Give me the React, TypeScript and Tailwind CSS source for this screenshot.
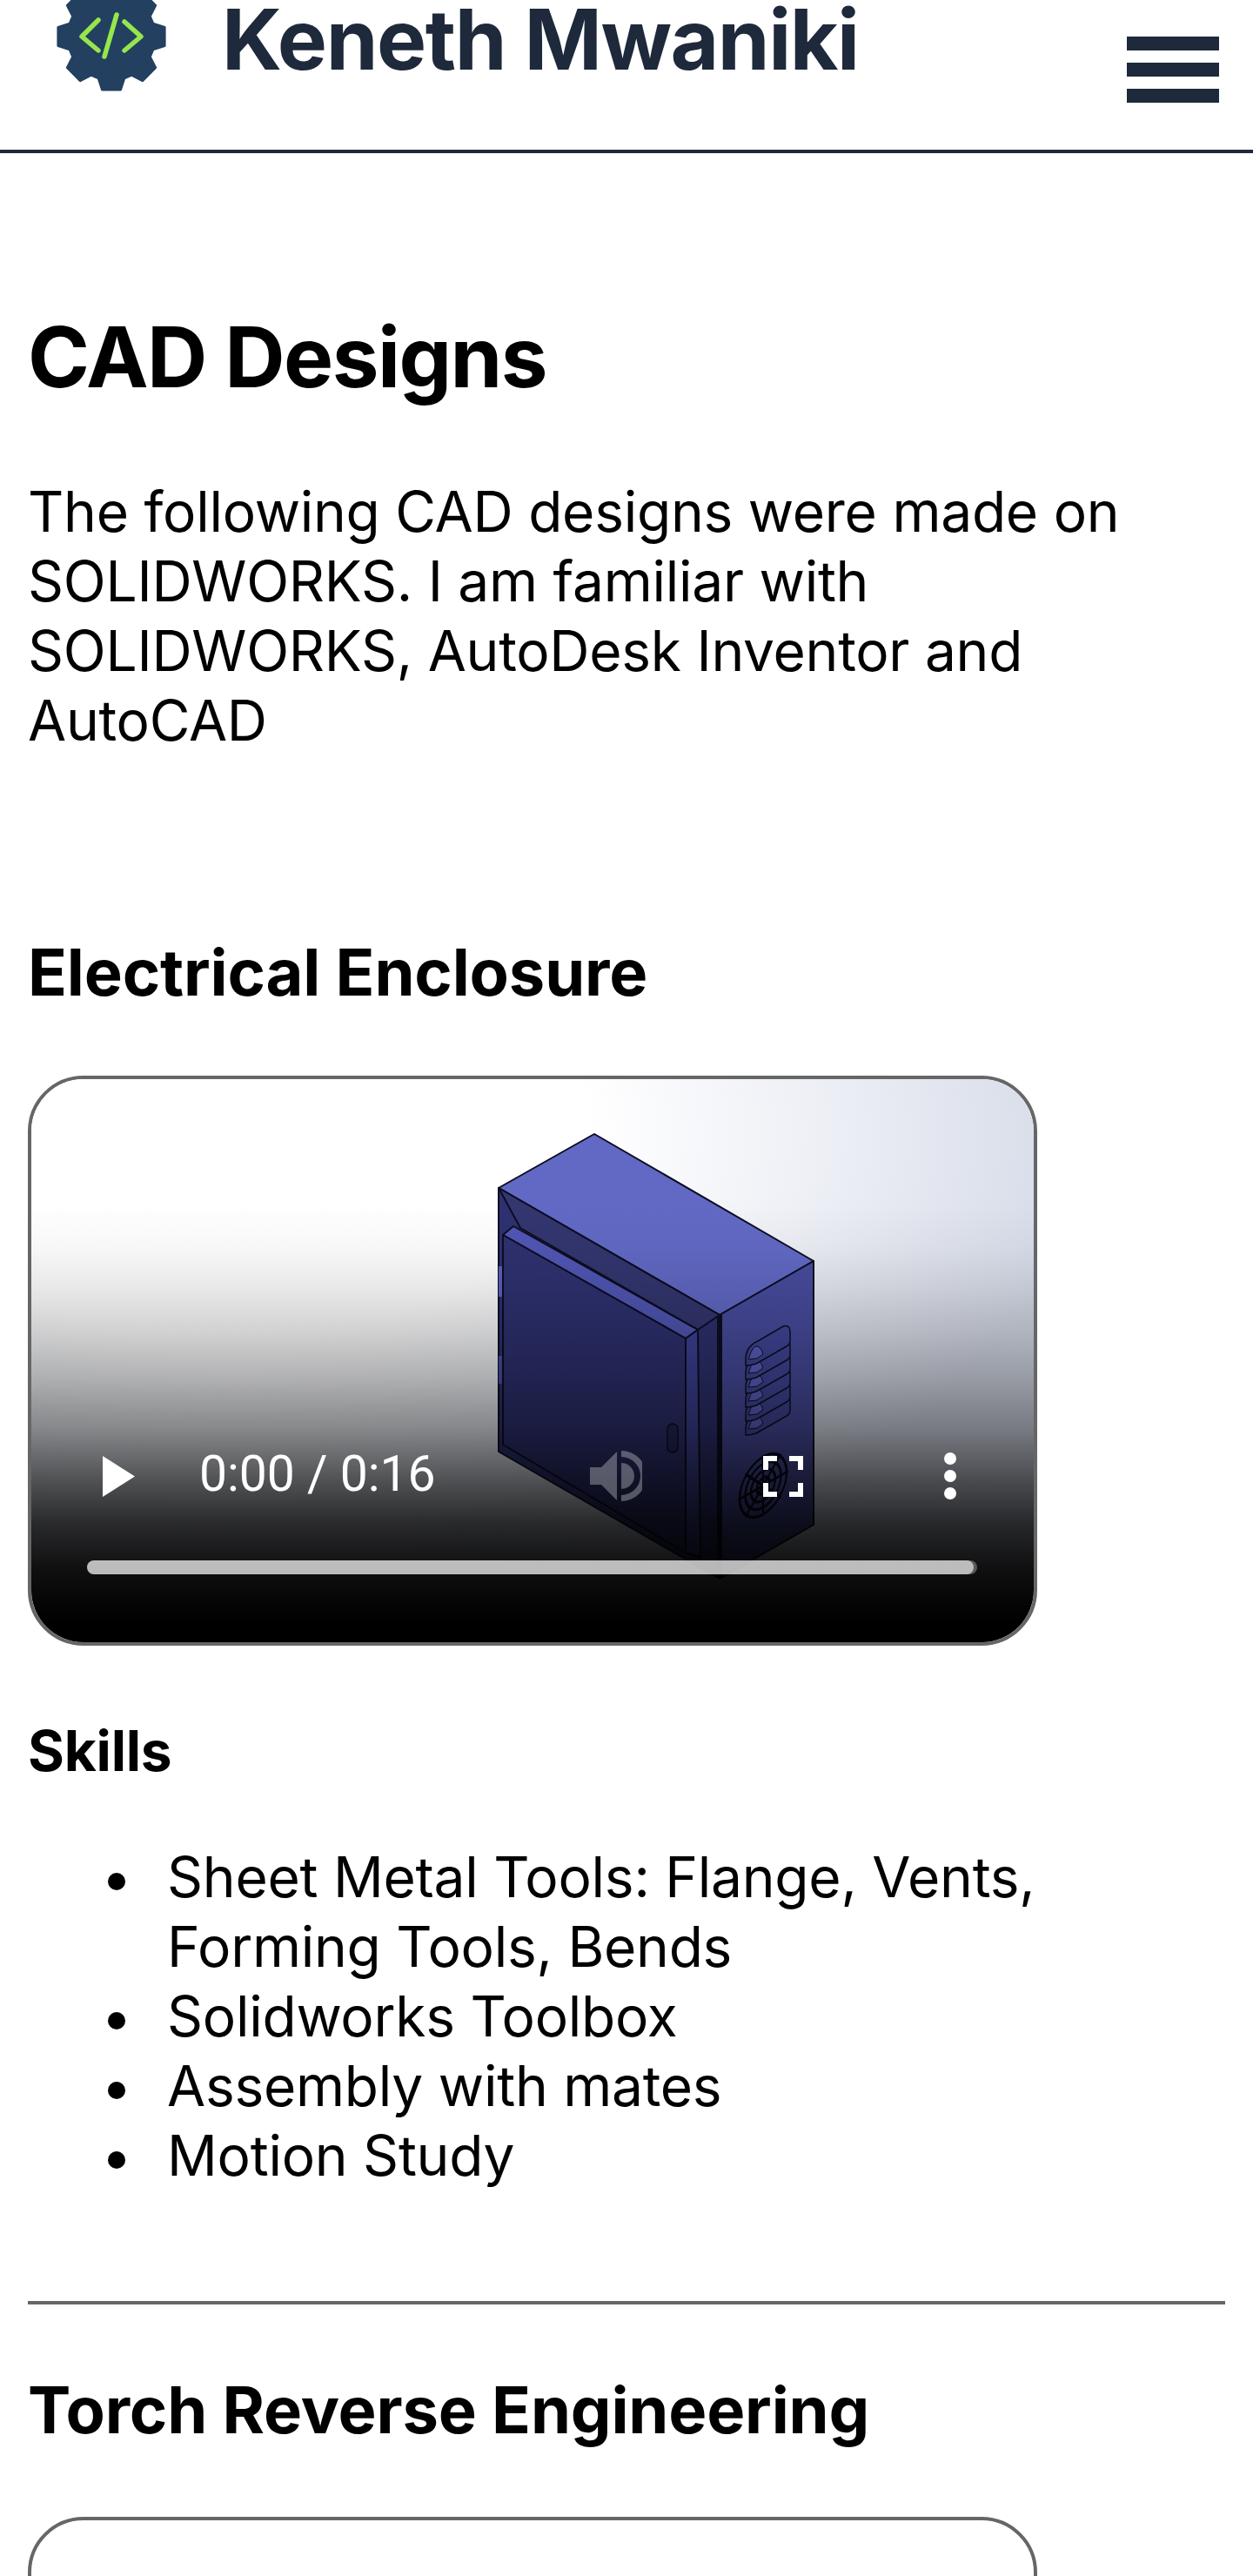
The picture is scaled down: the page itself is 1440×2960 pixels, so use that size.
import React from "react";

const gearPoints = () => {
  const pts: string[] = [];
  for (let i = 0; i < 8; i++) {
    const a = (i * Math.PI) / 4;
    const spread: [number, number][] = [
      [50, -0.3],
      [62, -0.17],
      [62, 0.17],
      [50, 0.3],
    ];
    spread.forEach(([r, d]) => {
      pts.push(`${(64 + r * Math.cos(a + d)).toFixed(1)},${(64 + r * Math.sin(a + d)).toFixed(1)}`);
    });
  }
  return pts.join(" ");
};

function Logo() {
  return (
    <svg viewBox="0 0 128 128" className="w-[128px] h-[128px] shrink-0">
      <polygon points={gearPoints()} fill="#234060" stroke="#234060" strokeWidth="3" strokeLinejoin="round" />
      <g fill="none" stroke="#96e64c" strokeWidth="5.5" strokeLinecap="round" strokeLinejoin="round">
        <polyline points="49,45 30,64 49,80" />
        <line x1="70" y1="39" x2="56" y2="87" />
        <polyline points="79,47 98,64 79,80" />
      </g>
    </svg>
  );
}

// video poster, drawn in page coordinates of the first video box
function Enclosure() {
  const louvers = [5, 4, 3, 2, 1, 0];
  const fanRings = [9, 17, 25, 33];
  const fanSpokes = [0, 45, 90, 135];
  return (
    <svg viewBox="36 1240 1152 647" className="absolute inset-0 w-full h-full">
      <defs>
        <radialGradient id="bgTint" cx="0.2" cy="0.1" r="0.85">
          <stop offset="0.42" stopColor="#ffffff" />
          <stop offset="0.68" stopColor="#eef0f6" />
          <stop offset="1" stopColor="#d6dbe8" />
        </radialGradient>
        <linearGradient id="fade" x1="0" y1="1240" x2="0" y2="1887" gradientUnits="userSpaceOnUse">
          <stop offset="0.22" stopColor="#000" stopOpacity="0" />
          <stop offset="0.3" stopColor="#000" stopOpacity="0.03" />
          <stop offset="0.37" stopColor="#000" stopOpacity="0.09" />
          <stop offset="0.45" stopColor="#000" stopOpacity="0.18" />
          <stop offset="0.53" stopColor="#000" stopOpacity="0.29" />
          <stop offset="0.62" stopColor="#000" stopOpacity="0.44" />
          <stop offset="0.71" stopColor="#000" stopOpacity="0.65" />
          <stop offset="0.79" stopColor="#000" stopOpacity="0.82" />
          <stop offset="0.87" stopColor="#000" stopOpacity="0.93" />
          <stop offset="0.94" stopColor="#000" stopOpacity="0.985" />
          <stop offset="0.97" stopColor="#000" stopOpacity="1" />
        </linearGradient>
      </defs>
      <rect x="36" y="1240" width="1152" height="647" fill="url(#bgTint)" />
      <g stroke="#0c0d22" strokeWidth="2" strokeLinejoin="round">
        <polygon points="683,1303 935,1449 827,1511 573,1365" fill="#6169c4" />
        <polygon points="573,1365 827,1511 827,1814 573,1668" fill="#2e3170" />
        <polygon points="827,1511 935,1449 935,1752 827,1814" fill="#484c9e" />
        <polygon points="573,1365 598,1411 802,1528 827,1511" fill="#33366f" />
        <polygon points="578,1419 590,1409 802,1528 788,1538" fill="#5056b4" />
        <polygon points="578,1419 788,1538 788,1784 578,1660" fill="#2e3170" />
        <polygon points="788,1538 802,1528 805,1790 788,1784" fill="#3d4195" />
        <line x1="825" y1="1513" x2="825" y2="1812" />
        <line x1="829" y1="1511" x2="829" y2="1812" />
        <rect x="767" y="1636" width="12" height="33" rx="6" fill="#25275c" strokeWidth="1.5" />
      </g>
      <rect x="573" y="1455" width="4" height="35" fill="#5a60bd" />
      <rect x="573" y="1558" width="4" height="32" fill="#4a4fa8" />
      <g stroke="#0c0d22" strokeWidth="1.5">
        {louvers.map((i) => {
          const y = 1562 + i * 16;
          return (
            <g key={i}>
              <path
                d={`M857 ${y} q0 -15 14 -21 l29 -17 q8 -2 8 6 v10 q0 5 -4 7 l-35 20 q-6 2 -12 2z`}
                fill="#42469a"
              />
              <path d={`M860 ${y} q5 -17 11 -15 q5 3 6 9 l-7 5z`} fill="#5b61c0" strokeWidth="1" />
            </g>
          );
        })}
      </g>
      <g transform="matrix(0.82 -0.47 0 1 877 1707)" fill="none" stroke="#07071a" strokeWidth="3">
        {fanRings.map((r) => (
          <circle key={r} r={r} />
        ))}
        {fanSpokes.map((a) => (
          <line key={a} x1="-35" y1="0" x2="35" y2="0" transform={`rotate(${a})`} />
        ))}
      </g>
      <rect x="36" y="1240" width="1152" height="647" fill="url(#fade)" />
    </svg>
  );
}

function VideoControls() {
  return (
    <>
      <div className="absolute left-[82px] top-[427px] h-[58px] flex items-center">
        <svg viewBox="0 0 37 47" className="w-[37px] h-[47px] shrink-0">
          <polygon points="0,0 37,23.5 0,47" fill="#fff" />
        </svg>
        <span className="ml-[74px] w-[266px] -mt-[6px] text-white text-[57px] leading-none whitespace-nowrap font-['Roboto',sans-serif]">
          0:00 / 0:16
        </span>
        <svg viewBox="0 0 60 58" className="ml-[183px] w-[60px] h-[58px] shrink-0">
          <g fill="#fff" fillOpacity="0.3">
            <polygon points="0,19 13,19 31,1 31,57 13,39 0,39" />
            <path d="M36 14 a15 15 0 0 1 0 30z" />
            <path d="M36 0 a29 29 0 0 1 0 58 v-7 a22 22 0 0 0 0 -44z" />
          </g>
        </svg>
        <svg viewBox="0 0 46 47" className="ml-[139px] w-[46px] h-[47px] shrink-0">
          <path d="M3 16 V3 H16 M30 3 H43 V16 M43 31 V44 H30 M16 44 H3 V31" fill="none" stroke="#fff" strokeWidth="6" />
        </svg>
        <div className="ml-[162px] flex flex-col gap-[6.5px] shrink-0">
          <span className="block w-[13.5px] h-[13.5px] rounded-full bg-white" />
          <span className="block w-[13.5px] h-[13.5px] rounded-full bg-white" />
          <span className="block w-[13.5px] h-[13.5px] rounded-full bg-white" />
        </div>
      </div>
      <div className="absolute left-[64px] top-[553px] w-[1023px] h-[16px] rounded-full bg-white/30">
        <div className="w-[1019px] h-[16px] rounded-full bg-white/60" />
      </div>
    </>
  );
}

export default function App() {
  return (
    <div className="w-[1440px] h-[2960px] overflow-hidden bg-white text-black font-['Inter',sans-serif]">
      <header className="h-[176px] border-b-4 border-[#1e293b] flex justify-between items-start pl-[64px] pr-[39px]">
        <div className="flex items-center h-[84px] gap-[63px] text-[#1e293b]">
          <Logo />
          <span className="mt-[6px] text-[96px] font-bold tracking-[-1.4px] whitespace-nowrap leading-[90px]">
            Keneth Mwaniki
          </span>
        </div>
        <div className="flex flex-col gap-[14px] pt-[42px]">
          <span className="block w-[106px] h-[16px] bg-[#1e293b]" />
          <span className="block w-[106px] h-[16px] bg-[#1e293b]" />
          <span className="block w-[106px] h-[16px] bg-[#1e293b]" />
        </div>
      </header>
      <main className="px-[32px]">
        <h1 className="mt-[176px] text-[96px] leading-[116px] font-bold tracking-[-1.5px]">CAD Designs</h1>
        <p className="mt-[80px] text-[64px] leading-[80px] tracking-[-0.25px]">
          The following CAD designs were made on SOLIDWORKS. I am familiar with SOLIDWORKS, AutoDesk Inventor and AutoCAD
        </p>
        <h2 className="mt-[205px] text-[74px] leading-[88px] font-bold tracking-[-0.15px]">Electrical Enclosure</h2>
        <div className="relative mt-[75px] w-[1160px] h-[655px] border-4 border-[#666] rounded-[64px] overflow-hidden">
          <Enclosure />
          <VideoControls />
        </div>
        <h3 className="mt-[81px] text-[64px] leading-[80px] font-bold tracking-[-0.25px]">Skills</h3>
        <ul className="mt-[65px] pl-[92px] text-[64px] leading-[80px] tracking-[-0.25px]">
          {[
            "Sheet Metal Tools: Flange, Vents, Forming Tools, Bends",
            "Solidworks Toolbox",
            "Assembly with mates",
            "Motion Study",
          ].map((item) => (
            <li key={item} className="flex items-start">
              <span className="block shrink-0 w-[20px] h-[20px] mt-[35px] mr-[48px] rounded-full bg-black" />
              <span>{item}</span>
            </li>
          ))}
        </ul>
        <hr className="mt-[127px] border-t-4 border-[#666]" />
        <h2 className="mt-[77px] text-[74px] leading-[88px] font-bold tracking-[-0.15px]">Torch Reverse Engineering</h2>
        <div className="mt-[79px] w-[1160px] h-[655px] border-4 border-[#666] rounded-[64px]" />
      </main>
    </div>
  );
}
